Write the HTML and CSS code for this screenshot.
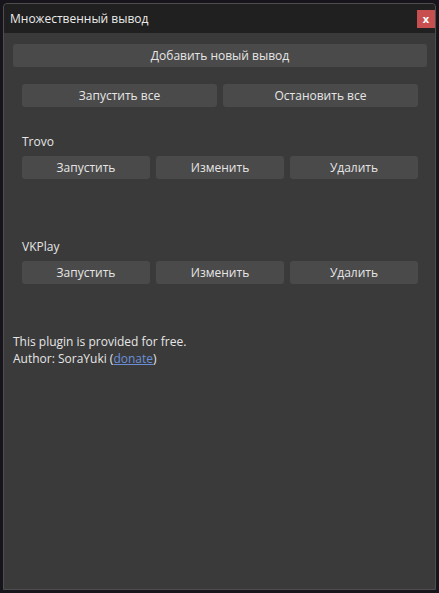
FILE: index.html
```html
<!DOCTYPE html>
<html lang="ru">
<head>
<meta charset="UTF-8">
<title>Множественный вывод</title>
<link rel="stylesheet" href="styles.css">
</head>
<body>

<div class="window">
    <div class="titlebar">
        <span class="title">Множественный вывод</span>
        <span class="close">x</span>
    </div>

    <div class="content">
        <button class="btn btn-wide">Добавить новый вывод</button>

        <div class="group">
            <div class="row row-2">
                <button class="btn">Запустить все</button>
                <button class="btn">Остановить все</button>
            </div>

            <!-- outputs -->
            <div class="target">
                <div class="target-name">Trovo</div>
                <div class="row row-3">
                    <button class="btn">Запустить</button>
                    <button class="btn">Изменить</button>
                    <button class="btn">Удалить</button>
                </div>
            </div>

            <div class="target target-next">
                <div class="target-name">VKPlay</div>
                <div class="row row-3">
                    <button class="btn">Запустить</button>
                    <button class="btn">Изменить</button>
                    <button class="btn">Удалить</button>
                </div>
            </div>
        </div>

        <p class="footer">
            This plugin is provided for free.<br>
            Author: SoraYuki (<a href="#">donate</a>)
        </p>
    </div>
</div>

</body>
</html>
```

FILE: styles.css
```css
body {
    margin: 0;
    padding: 3px;
    background-color: #17141b;
    font-family: "Open Sans", "Noto Sans", sans-serif;
    font-size: 12px;
    color: #e6e6e6;
}
.window {
    width: 431px;
    height: 585px;
    background-color: #3a3a3a;
    border: 1px solid #4e4e4e;
    border-radius: 4px 4px 0 0;
    overflow: hidden;
}
.titlebar {
    height: 29px;
    background-color: #1f201f;
    display: flex;
    align-items: center;
    justify-content: space-between;
    padding: 0 0 0 6px;
}
.title {
    color: #ececec;
}
.close {
    width: 18px;
    height: 18px;
    background-color: #c84f4f;
    color: #fff;
    font-size: 11px;
    font-weight: bold;
    line-height: 17px;
    text-align: center;
}
.content {
    padding: 11px 8px 0 9px;
}
.btn {
    display: block;
    height: 23px;
    padding: 0;
    border: none;
    border-radius: 3px;
    background-color: #4a4a4a;
    color: #e6e6e6;
    font-family: inherit;
    font-size: 12px;
    line-height: 23px;
}
.btn-wide {
    width: 100%;
}
.group {
    padding: 17px 9px 0 9px;
}
.row {
    display: grid;
    gap: 6px;
}
.row-2 {
    grid-template-columns: 1fr 1fr;
}
.row-3 {
    grid-template-columns: 1fr 1fr 1fr;
}
.target {
    margin-top: 26px;
}
.target-next {
    margin-top: 59px;
}
.target-name {
    line-height: 17px;
    margin-bottom: 6px;
}
.footer {
    margin: 49px 0 0 0;
    line-height: 17px;
}
.footer a {
    color: #6a8fd8;
}
```
